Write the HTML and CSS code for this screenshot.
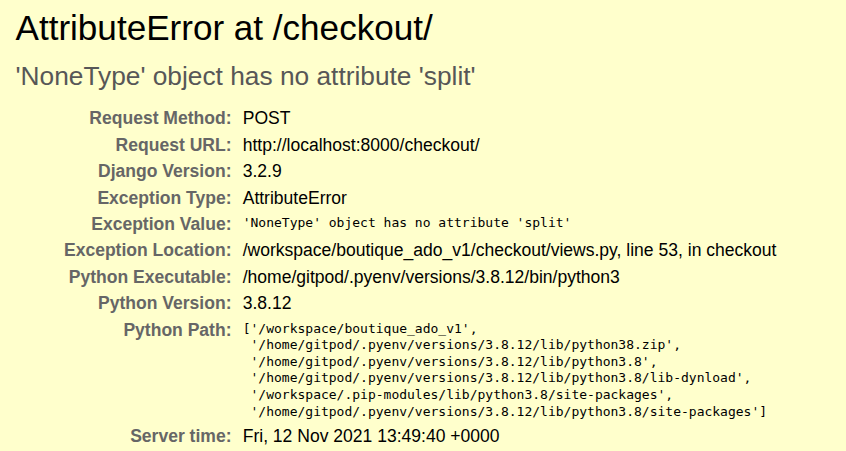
FILE: index.html
```html
<!DOCTYPE html>
<html lang="en">
<head>
<meta charset="utf-8">
<title>AttributeError at /checkout/</title>
<link rel="stylesheet" href="styles.css">
</head>
<body>
<div class="summary">
  <h1 class="title">AttributeError at /checkout/</h1>
  <div class="exception-value">'NoneType' object has no attribute 'split'</div>
  <table class="meta">
    <tbody>
      <tr><th>Request Method:</th><td>POST</td></tr>
      <tr><th>Request URL:</th><td>http://localhost:8000/checkout/</td></tr>
      <tr><th>Django Version:</th><td>3.2.9</td></tr>
      <tr><th>Exception Type:</th><td>AttributeError</td></tr>
      <tr><th>Exception Value:</th><td><pre class="code">'NoneType' object has no attribute 'split'</pre></td></tr>
      <tr><th>Exception Location:</th><td>/workspace/boutique_ado_v1/checkout/views.py, line 53, in checkout</td></tr>
      <tr><th>Python Executable:</th><td>/home/gitpod/.pyenv/versions/3.8.12/bin/python3</td></tr>
      <tr><th>Python Version:</th><td>3.8.12</td></tr>
      <tr><th>Python Path:</th><td><pre class="code">['/workspace/boutique_ado_v1',
 '/home/gitpod/.pyenv/versions/3.8.12/lib/python38.zip',
 '/home/gitpod/.pyenv/versions/3.8.12/lib/python3.8',
 '/home/gitpod/.pyenv/versions/3.8.12/lib/python3.8/lib-dynload',
 '/workspace/.pip-modules/lib/python3.8/site-packages',
 '/home/gitpod/.pyenv/versions/3.8.12/lib/python3.8/site-packages']</pre></td></tr>
      <tr><th>Server time:</th><td>Fri, 12 Nov 2021 13:49:40 +0000</td></tr>
    </tbody>
  </table>
</div>
</body>
</html>
```

FILE: styles.css
```css
html, body {
  margin: 0;
  padding: 0;
}

body {
  background: #ffffcc;
  color: #000;
  font-family: "Liberation Sans", Arial, sans-serif;
  font-size: 17.55px;
}

.summary {
  background: #ffffcc;
  padding: 8px 15.5px 0;
}

.title {
  margin: 0;
  font-weight: normal;
  font-size: 35.1px;
  line-height: 40px;
}

.exception-value {
  margin: 13px 0 14.4px;
  color: #575757;
  font-size: 26.3px;
  line-height: 30px;
}

.meta {
  border: none;
  border-collapse: collapse;
  background: transparent;
}

.meta th,
.meta td {
  vertical-align: top;
  padding: 3px 0;
  line-height: 20.4px;
}

.meta th {
  width: 216px;
  padding-right: 11.2px;
  text-align: right;
  color: #666;
  font-weight: bold;
  white-space: nowrap;
}

.meta td {
  white-space: nowrap;
}

.code {
  margin: 1px 0 0;
  font-family: "DejaVu Sans Mono", "Liberation Mono", monospace;
  font-size: 13px;
  line-height: 16.6px;
  white-space: pre;
}
```
